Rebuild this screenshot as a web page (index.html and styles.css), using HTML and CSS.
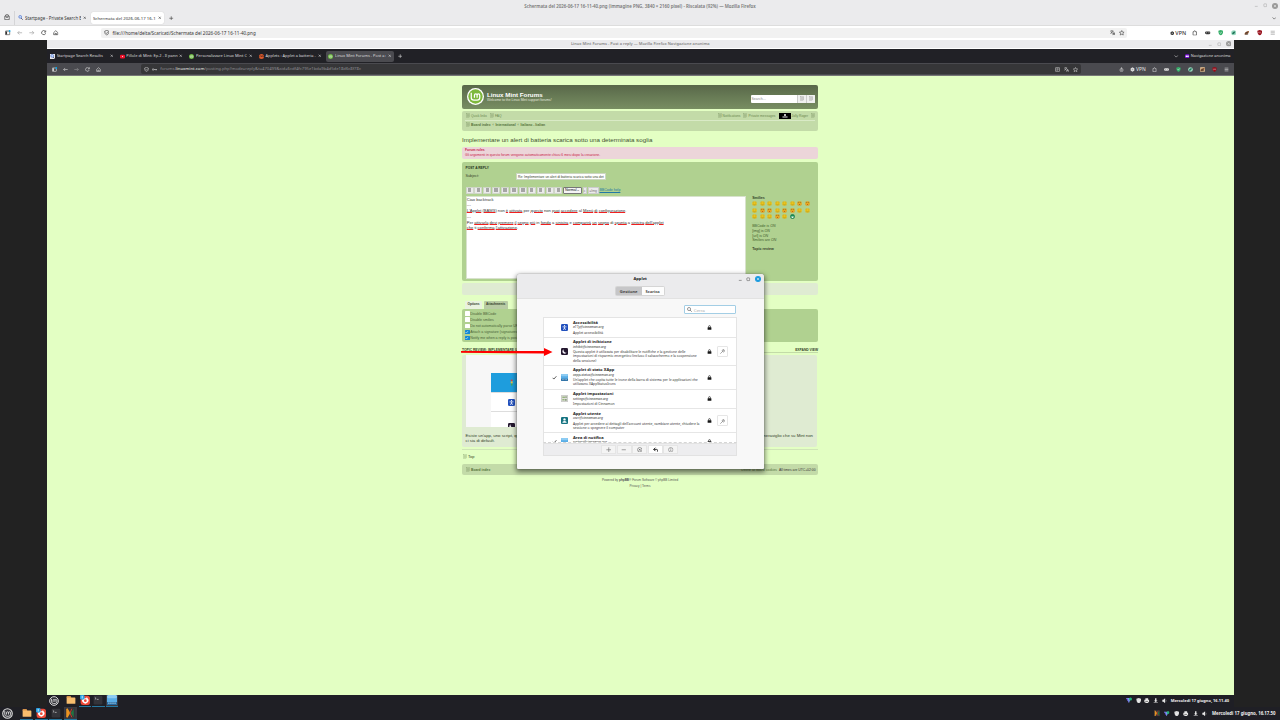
FILE: index.html
```html
<!DOCTYPE html>
<html lang="it">
<head>
<meta charset="utf-8">
<title>Schermata del 2026-06-17 16-11-40.png</title>
<link rel="stylesheet" href="styles.css">
</head>
<body>
<svg class="defs" aria-hidden="true">
  <symbol id="back" viewBox="0 0 16 16"><path d="M15 8H2M7 3L2 8l5 5" fill="none" stroke="currentColor" stroke-width="1.8"/></symbol>
  <symbol id="fwd" viewBox="0 0 16 16"><path d="M1 8h13M9 3l5 5-5 5" fill="none" stroke="currentColor" stroke-width="1.8"/></symbol>
  <symbol id="reload" viewBox="0 0 16 16"><path d="M13.5 9.500A6 6 0 1 1 12.500 4M14 1v5H9" fill="none" stroke="currentColor" stroke-width="2"/></symbol>
  <symbol id="home" viewBox="0 0 16 16"><path d="M2 7.500L8 2l6 5.500V14H2zM6 14v-4h4v4" fill="none" stroke="currentColor" stroke-width="1.800"/></symbol>
  <symbol id="side" viewBox="0 0 16 16"><rect x="1" y="3" width="13" height="11" rx="1.500" fill="none" stroke="currentColor" stroke-width="2"/><path d="M2 4h4v9H2z" fill="currentColor"/><circle cx="14" cy="3" r="3" fill="#00a8f0"/></symbol>
  <symbol id="shield" viewBox="0 0 16 16"><path d="M8 1l6 2.500c0 6-2 9.500-6 11.500C4 13 2 9.500 2 3.500z" fill="none" stroke="currentColor" stroke-width="1.800"/><path d="M5 8l3 2 3-4" fill="none" stroke="currentColor" stroke-width="1.500"/></symbol>
  <symbol id="shieldf" viewBox="0 0 16 16"><path d="M8 0l7 2.500c0 7-2 11-7 13.500C3 13.500 1 9.500 1 2.500z" fill="currentColor"/><path d="M5 7l2.500 3L11 5" fill="none" stroke="#fff" stroke-width="1.500"/></symbol>
  <symbol id="key" viewBox="0 0 16 16"><path d="M6 8h10M13 8v3M1 8a2.500 2.500 0 1 0 5 0 2.500 2.500 0 1 0-5 0" fill="none" stroke="currentColor" stroke-width="1.800"/></symbol>
  <symbol id="x" viewBox="0 0 16 16"><path d="M3 3l10 10M13 3L3 13" stroke="currentColor" stroke-width="2.500"/></symbol>
  <symbol id="plus" viewBox="0 0 16 16"><path d="M8 1v14M1 8h14" stroke="currentColor" stroke-width="2"/></symbol>
  <symbol id="minus" viewBox="0 0 16 16"><path d="M2 8h12" stroke="currentColor" stroke-width="2"/></symbol>
  <symbol id="down" viewBox="0 0 16 16"><path d="M2 5l6 6 6-6" fill="none" stroke="currentColor" stroke-width="2"/></symbol>
  <symbol id="menu" viewBox="0 0 16 16"><path d="M2 3.500h12M2 8h12M2 12.500h12" stroke="currentColor" stroke-width="1.800"/></symbol>
  <symbol id="star" viewBox="0 0 16 16"><path d="M8 1.500l2 4.500 5 .5-3.800 3.300L12.500 15 8 12.300 3.500 15l1.300-5.200L1 6.500 6 6z" fill="none" stroke="currentColor" stroke-width="1.600"/></symbol>
  <symbol id="trans" viewBox="0 0 16 16"><path d="M1 3h9M5.500 1v2M9 3c-1 3-4 6-8 7M3 5c1 2 3 4 5 5M8 15l3.500-8 3.500 8M9 12h5" fill="none" stroke="currentColor" stroke-width="1.700"/></symbol>
  <symbol id="puzzle" viewBox="0 0 16 16"><path d="M3 15V5h3c-1-4 5-4 4 0h3v10z" fill="none" stroke="currentColor" stroke-width="1.800"/></symbol>
  <symbol id="goggles" viewBox="0 0 16 16"><rect y="4" width="16" height="8" rx="4" fill="currentColor"/><circle cx="4.500" cy="8" r="1.800" fill="#aaa"/><circle cx="11.500" cy="8" r="1.800" fill="#aaa"/></symbol>
  <symbol id="vpn" viewBox="0 0 16 16"><path d="M8 1l6 3.500v7L8 15l-6-3.500v-7z" fill="currentColor"/><circle cx="8" cy="8" r="2.500" fill="#aaa"/></symbol>
  <symbol id="leaf" viewBox="0 0 16 16"><circle cx="8" cy="8" r="7.500" fill="#9ad8bf"/><path d="M3 11c1-6 5-7 9-7 0 5-3 8-7 8z" fill="#23795c"/></symbol>
  <symbol id="cat" viewBox="0 0 16 16"><path d="M1 13c1-7 6-9 14-10-1 5-3 9-8 10z" fill="#a5673f"/><path d="M4 9l8-3M3 12h9" stroke="#252525" stroke-width="2"/></symbol>
  <symbol id="ubo" viewBox="0 0 16 16"><path d="M8 0l7 2c0 7-2 11-7 14C3 13 1 9 1 2z" fill="#960c18"/><path d="M4 5v3q2 3 4 0V5M11 5v5" fill="none" stroke="#fff" stroke-width="1"/></symbol>
  <symbol id="reader" viewBox="0 0 16 16"><rect x="2" y="1" width="12" height="14" rx="2" fill="none" stroke="currentColor" stroke-width="1.800"/><path d="M5 5h6M5 8h6M5 11h4" stroke="currentColor" stroke-width="1.500"/></symbol>
  <symbol id="drop" viewBox="0 0 16 16"><path d="M8 2l5 7q0 6-5 6t-5-6zM8 2v6M6 8l2 3 2-3" fill="none" stroke="currentColor" stroke-width="1.800"/></symbol>
  <symbol id="winc" viewBox="0 0 16 16"><circle cx="8" cy="8" r="8" fill="currentColor"/><path d="M5 5l6 6M11 5l-6 6" stroke="#eee" stroke-width="1.600"/></symbol>
  <symbol id="max" viewBox="0 0 16 16"><rect x="3" y="3" width="10" height="10" rx="2" fill="none" stroke="currentColor" stroke-width="2"/></symbol>
  <symbol id="min" viewBox="0 0 16 16"><path d="M3 12h10" stroke="currentColor" stroke-width="2"/></symbol>
  <symbol id="bag" viewBox="0 0 16 16"><path d="M2 6h12v9H2zM3 6l2-4h6l2 4M5 9h6" fill="none" stroke="currentColor" stroke-width="1.800"/></symbol>
  <symbol id="sp" viewBox="0 0 16 16"><circle cx="7" cy="6" r="4.500" fill="#c9defb" stroke="#4467c8" stroke-width="2"/><path d="M10 10l5 5" stroke="#303050" stroke-width="2.500"/></symbol>
  <symbol id="yt" viewBox="0 0 16 16"><rect y="2" width="16" height="12" rx="4" fill="#f0122c"/><path d="M6.500 5.500l4 2.500-4 2.500z" fill="#fff"/></symbol>
  <symbol id="mint" viewBox="0 0 16 16"><circle cx="8" cy="8" r="8" fill="#69b53f"/><path d="M4 4v5q0 3 3 3h3q2.500 0 2.500-3V7q0-1.500-1.500-1.500T9.500 7v2.500M9.500 7q0-1.500-1.500-1.500T6.500 7v2.500" fill="none" stroke="#fff" stroke-width="1.300"/></symbol>
  <symbol id="mintw" viewBox="0 0 16 16"><circle cx="8" cy="8" r="7" fill="#33333a" stroke="#ddd" stroke-width="1.500"/><path d="M4 4.500V9q0 3 3 3h3q2.500 0 2.500-3V7q0-1.500-1.500-1.500T9.500 7v2.500M9.500 7q0-1.500-1.500-1.500T6.500 7v2.500" fill="none" stroke="#ddd" stroke-width="1.300"/></symbol>
  <symbol id="cinn" viewBox="0 0 16 16"><circle cx="8" cy="8" r="8" fill="#dc5a2c"/><path d="M2 9l4-4 3 4 3-4 3 5" fill="none" stroke="#3a1d16" stroke-width="2"/></symbol>
  <symbol id="page" viewBox="0 0 16 16"><rect x="2.500" y="1" width="11" height="14" fill="none" stroke="currentColor" stroke-width="1"/><path d="M5 4h2v3H5zM9 4h2v3H9zM5 9h2v3H5zM9 9h2v3H9z" fill="none" stroke="currentColor" stroke-width=".9"/></symbol>
  <symbol id="lock" viewBox="0 0 16 16"><rect x="2" y="7" width="12" height="8" rx="1" fill="#151515"/><path d="M5 8V5q0-3 3-3t3 3v3" fill="none" stroke="#151515" stroke-width="2"/></symbol>
  <symbol id="wrench" viewBox="0 0 16 16"><path d="M1 15l7-7M8 8a3.800 3.800 0 1 0 2-6 3.800 3.800 0 0 0-2 6M12 3l-1 3" fill="none" stroke="#444" stroke-width="1.500"/></symbol>
  <symbol id="check" viewBox="0 0 16 16"><path d="M2 9l4 4 8-9" fill="none" stroke="currentColor" stroke-width="2.300"/></symbol>
  <symbol id="undo" viewBox="0 0 16 16"><path d="M7 2L2 7l5 5M2 7h9q4 0 3 7" fill="none" stroke="#111" stroke-width="2.500"/></symbol>
  <symbol id="cx" viewBox="0 0 16 16"><circle cx="8" cy="8" r="6.500" fill="none" stroke="#444" stroke-width="1.400"/><path d="M5.500 5.500l5 5M10.500 5.500l-5 5" stroke="#444" stroke-width="1.800"/></symbol>
  <symbol id="info" viewBox="0 0 16 16"><circle cx="8" cy="8" r="6.500" fill="none" stroke="#555" stroke-width="1.300"/><path d="M8 4v2M8 7v5" stroke="#555" stroke-width="1.600"/></symbol>
  <symbol id="glass" viewBox="0 0 16 16"><circle cx="6.500" cy="6.500" r="5" fill="none" stroke="#444" stroke-width="1.700"/><path d="M10 10l5 5" stroke="#444" stroke-width="2"/></symbol>
  <symbol id="acc" viewBox="0 0 16 16"><rect width="16" height="16" rx="3" fill="#2150bd"/><circle cx="8" cy="3.700" r="1.500" fill="#fff"/><path d="M3.500 6.500h9M8 6.500v3.500M8 9l-2.500 4.500M8 9l2.500 4.500" fill="none" stroke="#fff" stroke-width="1.700"/></symbol>
  <symbol id="moon" viewBox="0 0 16 16"><rect width="16" height="16" rx="3" fill="#24182f"/><path d="M6 3a5.300 5.300 0 1 0 7 7.500A6 6 0 0 1 6 3z" fill="#f5f2fa"/></symbol>
  <symbol id="panel" viewBox="0 0 16 16"><rect width="16" height="16" rx="2.500" fill="#5aaee6"/><rect width="16" height="5" rx="2.500" fill="#8dccf3"/><path d="M0 11h16v3.500Q16 16 14 16H2q-2 0-2-1.500z" fill="#256aa0"/><path d="M2 13h12" stroke="#d8effd" stroke-width="1.500" stroke-dasharray="2 1.300"/></symbol>
  <symbol id="sett" viewBox="0 0 16 16"><rect x=".5" y=".5" width="15" height="15" rx="2" fill="#dedfda" stroke="#999"/><path d="M3 5h6M3 11h5" stroke="#6a9a42" stroke-width="2"/><path d="M10 3h3v4h-3zM9 9h4v4H9z" fill="#8c9f80"/></symbol>
  <symbol id="user" viewBox="0 0 16 16"><rect width="16" height="16" rx="2.500" fill="#157381"/><circle cx="8" cy="5.500" r="2.700" fill="#fff"/><path d="M3 13q0-4 5-4t5 4z" fill="#fff"/></symbol>
  <symbol id="folder" viewBox="0 0 16 16"><path d="M1 3q0-1 1-1h5l1.500 2H14q1 0 1 1v8q0 1-1 1H2q-1 0-1-1z" fill="#f7bd6d"/><path d="M1 3q0-1 1-1h5l1.500 2H1z" fill="#dc9345"/></symbol>
  <symbol id="ff" viewBox="0 0 16 16"><rect x="1" y="1" width="15" height="15" rx="4" fill="#ee4938"/><path d="M5 5a5 5 0 1 0 7 0l-1-2-1 2H8z" fill="#fff"/><circle cx="8.500" cy="9" r="2.200" fill="#ee4938"/><circle cx="3.500" cy="3.500" r="4" fill="#2aa0e2"/><path d="M3.500 1.500v4" stroke="#fff" stroke-width="1.200"/></symbol>
  <symbol id="term" viewBox="0 0 16 16"><rect x="1" y="1" width="14" height="14" rx="2" fill="#34343a"/><path d="M3 4l2 1.500L3 7M6 7h3" fill="none" stroke="#ddd"/></symbol>
  <symbol id="xk" viewBox="0 0 16 16"><rect width="16" height="16" fill="#35333a"/><path d="M2 1l5 7-5 7z" fill="#ed9622"/><path d="M14 1L9 8l5 7z" fill="#237342"/><path d="M3 1l4 7-4 7" fill="none" stroke="#ed9622" stroke-width="2.500"/><path d="M11 1L8 8l3 7" fill="none" stroke="#d83b25" stroke-width="1.500"/></symbol>
  <symbol id="vtri" viewBox="0 0 16 16"><path d="M0 2h13L8 15z" fill="#77a5ea"/><path d="M0 2l5 2 3 11z" fill="#7148d6"/><circle cx="12" cy="4.500" r="4" fill="#23b67b"/></symbol>
  <symbol id="print" viewBox="0 0 16 16"><path d="M4 1h8v4H4zM1 5h14v7H1zM4 10h8v5H4z" fill="#e6e6e6"/><path d="M4 10h8" stroke="#222" stroke-width="1.500"/></symbol>
  <symbol id="dl" viewBox="0 0 16 16"><path d="M6 1h4v6h3l-5 5-5-5h3zM2 13h12v2H2z" fill="#e6e6e6"/></symbol>
  <symbol id="vol" viewBox="0 0 16 16"><path d="M1 5h3l5-4v14l-5-4H1z" fill="#e6e6e6"/><path d="M11 5q2 3 0 6" fill="none" stroke="#aaa" stroke-width="1.500"/></symbol>
  <symbol id="mask" viewBox="0 0 16 16"><rect y="1" width="16" height="14" rx="5" fill="#7a10d8"/><path d="M2 6q3-2 6 0 3-2 6 0 0 5-3 5-2 0-3-2-1 2-3 2-3 0-3-5z" fill="#fff"/></symbol>
  <symbol id="smile" viewBox="0 0 16 16"><circle cx="8" cy="8" r="7.500" fill="#f6cf20" stroke="#b69a30" stroke-width=".8"/><path d="M5.500 5v2.500M10.500 5v2.500" stroke="#5c4614" stroke-width="1.500"/><path d="M4 10.500q4 3 8 0" fill="none" stroke="#6c5214" stroke-width="1.200"/></symbol>
  <symbol id="smile2" viewBox="0 0 16 16"><circle cx="8" cy="8" r="7.500" fill="#f5b422" stroke="#b08030" stroke-width=".8"/><path d="M4 5.500h3M9 5.500h3" stroke="#463518" stroke-width="2"/><path d="M5 10q3 5 6 0z" fill="#a03018"/></symbol>
  <symbol id="green" viewBox="0 0 16 16"><circle cx="8" cy="8" r="7" fill="#168e55" stroke="#145c39"/><path d="M4 8h8q-1 5-4 5t-4-5" fill="#fff"/></symbol>
</svg>

<header class="titlebar outer-title"><span>Schermata del 2026-06-17 16-11-40.png (immagine PNG, 3840 × 2160 pixel) - Riscalata (92%) — Mozilla Firefox</span>
  <div class="wincontrols"><svg class="i4"><use href="#min"/></svg><svg class="i4"><use href="#max"/></svg><svg class="i6"><use href="#winc"/></svg></div>
</header>
<div class="outer-tabs">
  <div class="recent"><svg class="i6"><use href="#bag"/></svg></div>
  <div class="otab"><svg class="i5"><use href="#sp"/></svg><span>Startpage - Private Search E</span><svg class="i3"><use href="#x"/></svg></div>
  <div class="otab on"><span>Schermata del 2026-06-17 16-1</span><svg class="i3"><use href="#x"/></svg></div>
  <svg class="i4 addtab"><use href="#plus"/></svg>
  <svg class="i4 alltabs"><use href="#down"/></svg>
</div>
<nav class="bar outer-bar">
  <div class="navicons"><svg><use href="#side"/></svg><svg class="dim"><use href="#back"/></svg><svg class="dim"><use href="#fwd"/></svg><svg><use href="#reload"/></svg><svg><use href="#home"/></svg></div>
  <div class="url"><svg><use href="#shield"/></svg><span class="addr">file:///home/delta/Scaricati/Schermata del 2026-06-17 16-11-40.png</span><div class="urlend"><svg><use href="#trans"/></svg><svg><use href="#star"/></svg></div></div>
  <div class="ext"><div class="vpn"><svg><use href="#vpn"/></svg>VPN</div><svg><use href="#puzzle"/></svg><svg><use href="#goggles"/></svg><svg class="grn"><use href="#shieldf"/></svg><svg><use href="#leaf"/></svg><svg><use href="#cat"/></svg><svg><use href="#ubo"/></svg><svg class="dim"><use href="#menu"/></svg></div>
</nav>

<main class="shot">
  <div class="titlebar inner-title"><span>Linux Mint Forums - Post a reply — Mozilla Firefox Navigazione anonima</span>
    <div class="wincontrols"><svg class="i4"><use href="#min"/></svg><svg class="i4"><use href="#max"/></svg><svg class="i6"><use href="#winc"/></svg></div>
  </div>
  <div class="inner-tabs">
    <div class="itab"><svg class="i5 wbg"><use href="#sp"/></svg><span>Startpage Search Results</span><svg class="i3"><use href="#x"/></svg></div>
    <div class="itab"><svg class="i5"><use href="#yt"/></svg><span>Pillole di Mint: Ep.2 - Il pann</span><svg class="i3"><use href="#x"/></svg></div>
    <div class="itab"><svg class="i5"><use href="#mint"/></svg><span>Personalizzare Linux Mint C</span><svg class="i3"><use href="#x"/></svg></div>
    <div class="itab"><svg class="i5"><use href="#cinn"/></svg><span>Applets : Applet a batteria -</span><svg class="i3"><use href="#x"/></svg></div>
    <div class="itab on"><svg class="i5"><use href="#mint"/></svg><span>Linux Mint Forums - Post a r</span><svg class="i3"><use href="#x"/></svg></div>
    <svg class="i4 addtab"><use href="#plus"/></svg>
    <div class="private"><svg class="i4"><use href="#down"/></svg><svg class="i4"><use href="#mask"/></svg><span>Navigazione anonima</span></div>
  </div>
  <nav class="bar inner-bar">
    <div class="navicons"><svg><use href="#side"/></svg><svg><use href="#back"/></svg><svg class="dim"><use href="#fwd"/></svg><svg><use href="#reload"/></svg><svg><use href="#home"/></svg></div>
    <div class="url"><svg><use href="#shield"/></svg><svg class="key"><use href="#key"/></svg><span class="addr">forums.<b>linuxmint.com</b>/posting.php?mode=reply&amp;t=470499&amp;sid=6cdf4fc795e1bda9b4d5de18d6c8f78c</span><div class="urlend"><svg><use href="#reader"/></svg><svg><use href="#trans"/></svg><svg><use href="#star"/></svg></div></div>
    <div class="ext"><svg><use href="#drop"/></svg><div class="vpn"><svg><use href="#vpn"/></svg>VPN</div><svg><use href="#puzzle"/></svg><svg><use href="#goggles"/></svg><svg class="grn"><use href="#shieldf"/></svg><svg><use href="#leaf"/></svg><svg class="tan"><use href="#cat"/></svg><svg><use href="#ubo"/></svg><svg><use href="#menu"/></svg></div>
  </nav>

  <div class="page">
    <div class="forum">
      <div class="fhead"><svg class="logo" viewBox="0 0 32 32"><circle cx="16" cy="16" r="16" fill="#fff"/><circle cx="16" cy="16" r="13.500" fill="#7eb83c"/><path d="M8 9v9q0 5 5 5h6q5 0 5-5v-4q0-3-2.500-3T19 14v4.500M19 14q0-3-2.500-3T14 14v4.500" fill="none" stroke="#fff" stroke-width="2.300"/></svg>
        <div class="brand"><h1>Linux Mint Forums</h1><p>Welcome to the Linux Mint support forums!</p></div>
        <div class="search"><span>Search…</span><i><svg><use href="#page"/></svg></i><i><svg><use href="#page"/></svg></i></div>
      </div>
      <div class="fnav">
        <div class="frow"><svg class="pg"><use href="#page"/></svg><span>Quick links</span><svg class="pg"><use href="#page"/></svg><span>FAQ</span><div class="right"><svg class="pg"><use href="#page"/></svg><span>Notifications</span><svg class="pg"><use href="#page"/></svg><span class="pm">Private messages</span><svg class="avatar" viewBox="0 0 24 12"><rect width="24" height="12"/><circle cx="12" cy="4" r="2" fill="#fff"/><path d="M7 9l10-2M7 7l10 2" stroke="#fff"/></svg><span>Jolly Roger</span><svg class="pg last"><use href="#page"/></svg></div></div>
        <div class="frow crumbs"><svg class="pg"><use href="#page"/></svg><b>Board index &nbsp;‹&nbsp; International &nbsp;‹&nbsp; Italiano - Italian</b></div>
      </div>
      <h2>Implementare un alert di batteria scarica sotto una determinata soglia</h2>
      <div class="rules"><b>Forum rules</b><span>Gli argomenti in questo forum vengono automaticamente chiusi 6 mesi dopo la creazione.</span></div>
      <div class="post">
        <h3>POST A REPLY</h3>
        <div class="subject"><label>Subject:</label><div class="field">Re: Implementare un alert di batteria scarica sotto una det</div></div>
        <div class="tools"><i></i><i></i><i></i><i></i><i></i><i></i><i></i><i></i><i></i><i></i><i></i><div class="sel">Normal <svg><use href="#down"/></svg></div><em class="c">c</em><em class="img">=Img</em><a>BBCode help</a></div>
        <div class="compose">
          <div class="area"><p>Ciao backtrack</p><p>---</p><p><u>L'Applet</u> (<u>BAMS</u>) non <u>è</u> <u>attivata</u> per <u>questo</u> non <u>puoi</u> <u>accedere</u> al <u>Menù</u> <u>di</u> <u>configurazione</u>.</p><p>---</p><p>Per <u>attivarla</u> <u>devi</u> <u>premere</u> <u>il</u> <u>segno</u> <u>più</u> in <u>fondo</u> a <u>sinistra</u> e <u>comparirà</u> <u>un</u> <u>segno</u> di <u>spunta</u> a <u>sinistra</u> <u>dell'applet</u></p><p><u>che</u> ti <u>conferma</u> <u>l'attivazione</u>.</p></div>
          <aside><b>Smilies</b>
            <div class="smiles"><svg><use href="#smile"/></svg><svg><use href="#smile"/></svg><svg><use href="#smile"/></svg><svg><use href="#smile"/></svg><svg><use href="#smile"/></svg><svg><use href="#smile"/></svg><svg><use href="#smile2"/></svg><svg><use href="#smile2"/></svg><svg><use href="#smile"/></svg><svg><use href="#smile2"/></svg><svg><use href="#smile2"/></svg><svg><use href="#smile"/></svg><svg><use href="#smile2"/></svg><svg><use href="#smile2"/></svg><svg><use href="#smile"/></svg><svg><use href="#smile"/></svg><svg><use href="#smile"/></svg><svg><use href="#smile"/></svg><svg><use href="#smile"/></svg><svg><use href="#smile2"/></svg><svg><use href="#smile"/></svg><svg><use href="#green"/></svg></div>
            <p>BBCode is <em>ON</em></p><p>[img] is <em>ON</em></p><p>[url] is <em>ON</em></p><p>Smilies are <em>ON</em></p><b class="review">Topic review</b></aside>
        </div>
      </div>
      <div class="submit"></div>
      <div class="opttabs"><b>Options</b><b class="off">Attachments</b></div>
      <div class="options"><label><i></i>Disable BBCode</label><label><i></i>Disable smilies</label><label><i></i>Do not automatically parse URLs</label><label><i class="ck"><svg><use href="#check"/></svg></i>Attach a signature (signatures can be altered)</label><label><i class="ck"><svg><use href="#check"/></svg></i>Notify me when a reply is posted</label></div>
      <div class="tr-head"><b>TOPIC REVIEW: IMPLEMENTARE UN</b><b class="ev">EXPAND VIEW</b></div>
      <div class="tr-box">
        <div class="attach"><div class="sheet"><div class="blue"><svg viewBox="0 0 10 20"><path d="M4 1h3l1 4H3z" fill="#e64437"/><path d="M3 6h5v5H3z" fill="#f0bd39"/><path d="M3 12h5l-2 7z" fill="#4cab48"/></svg></div><div><svg><use href="#acc"/></svg></div><div class="cut"><svg><use href="#moon"/></svg></div></div></div>
        <p class="lastline"><span>Esiste un'app, uno script, qualcosa</span><span>meraviglio che su Mint non</span></p><p>ci sia di default.</p>
      </div>
      <div class="rule"></div>
      <div class="top"><svg class="pg"><use href="#page"/></svg>Top</div>
      <div class="fbar"><svg class="pg"><use href="#page"/></svg><b>Board index</b><span>Delete all board cookies</span><em>All times are UTC+02:00</em></div>
      <footer><p>Powered by <b>phpBB</b>® Forum Software © phpBB Limited</p><p>Privacy | Terms</p></footer>
    </div>
  </div>

  <div class="taskbar inner-task"><svg class="mi"><use href="#mintw"/></svg><div class="apps"><span><svg><use href="#folder"/></svg></span><span class="run"><svg><use href="#ff"/></svg></span><span class="run"><svg><use href="#term"/></svg></span><span class="run act"><svg><use href="#panel"/></svg></span></div>
    <div class="tray"><svg><use href="#vtri"/></svg><svg class="lt"><use href="#shieldf"/></svg><svg><use href="#print"/></svg><svg><use href="#dl"/></svg><svg><use href="#vol"/></svg><b>Mercoledì 17 giugno, 16.11.40</b></div></div>

  <section class="dialog">
    <div class="dhead"><div class="dtitle"><b>Applet</b><div class="wincontrols"><svg class="i4"><use href="#min"/></svg><svg class="i4"><use href="#max"/></svg><svg class="i6 blu"><use href="#winc"/></svg></div></div>
      <div class="switch"><b>Gestione</b><b class="wh">Scarica</b></div></div>
    <div class="find"><svg><use href="#glass"/></svg>Cerca</div>
    <div class="list">
      <div class="item r1"><i></i><svg class="ic"><use href="#acc"/></svg><div class="txt"><b>Accessibilità</b><em>a11y@cinnamon.org</em><p>Applet accessibilità</p></div><svg class="lk"><use href="#lock"/></svg></div>
      <div class="item r2"><i></i><svg class="ic"><use href="#moon"/></svg><div class="txt"><b>Applet di inibizione</b><em>inhibit@cinnamon.org</em><p>Questa applet è utilizzata per disabilitare le notifiche e la gestione delle<br>impostazioni di risparmio energetico (incluso il salvaschermo e la sospensione<br>della sessione)</p></div><svg class="lk"><use href="#lock"/></svg><div class="cfg"><svg><use href="#wrench"/></svg></div></div>
      <div class="item r3"><i><svg><use href="#check"/></svg></i><svg class="ic"><use href="#panel"/></svg><div class="txt"><b>Applet di stato XApp</b><em>xapp-status@cinnamon.org</em><p>Un'applet che ospita tutte le icone della barra di sistema per le applicazioni che<br>utilizzano XAppStatusIcons</p></div><svg class="lk"><use href="#lock"/></svg></div>
      <div class="item r4"><i></i><svg class="ic"><use href="#sett"/></svg><div class="txt"><b>Applet impostazioni</b><em>settings@cinnamon.org</em><p>Impostazioni di Cinnamon</p></div><svg class="lk"><use href="#lock"/></svg></div>
      <div class="item r5"><i></i><svg class="ic"><use href="#user"/></svg><div class="txt"><b>Applet utente</b><em>user@cinnamon.org</em><p>Applet per accedere ai dettagli dell'account utente, cambiare utente, chiudere la<br>sessione o spegnere il computer</p></div><svg class="lk"><use href="#lock"/></svg><div class="cfg"><svg><use href="#wrench"/></svg></div></div>
      <div class="item r6"><i><svg><use href="#check"/></svg></i><svg class="ic"><use href="#panel"/></svg><div class="txt"><b>Area di notifica</b><em>systray@cinnamon.org</em></div><svg class="lk"><use href="#lock"/></svg></div>
    </div>
    <div class="dtools"><i><svg><use href="#plus"/></svg></i><i><svg><use href="#minus"/></svg></i><i><svg><use href="#cx"/></svg></i><i class="w"><svg><use href="#undo"/></svg></i><i><svg><use href="#info"/></svg></i></div>
  </section>
  <svg class="arrow" viewBox="0 0 92 10"><path d="M0 3.900l83 .1V.9L91.500 5.100l-8.500 4V6.500L0 5.800z" fill="#f00"/></svg>
</main>
<div class="taskbar outer-task"><svg class="mi"><use href="#mintw"/></svg><div class="apps"><span class="run"><svg><use href="#folder"/></svg></span><span class="run"><svg><use href="#ff"/></svg></span><span class="run"><svg><use href="#term"/></svg></span><span class="run act"><svg><use href="#xk"/></svg></span></div>
  <div class="tray"><svg><use href="#xk"/></svg><svg><use href="#vtri"/></svg><svg class="lt"><use href="#shieldf"/></svg><svg><use href="#print"/></svg><svg><use href="#dl"/></svg><svg><use href="#vol"/></svg><b>Mercoledì 17 giugno, 16.17.50</b></div></div>
</body>
</html>
```
FILE: styles.css
```css
* { box-sizing: border-box; }
body { margin: 0; width: 1280px; height: 720px; overflow: hidden; background: #222; color: #333; font: 4px/6px "Noto Sans", "Open Sans", sans-serif; display: flex; flex-direction: column; }
h1, h2, h3, p { margin: 0; font: inherit; }
i, em { font-style: normal; }
svg { display: block; flex: none; }
.defs { position: absolute; width: 0; height: 0; }
span, b, em, p { white-space: nowrap; }
.i3 { width: 3.5px; height: 3.5px; }
.i4 { width: 4.5px; height: 4.5px; }
.i5 { width: 5px; height: 5px; }
.i6 { width: 6px; height: 6px; }

/* window chrome */
.titlebar { background: #ebebed; display: flex; justify-content: center; align-items: center; color: #777; font-weight: 600; font-size: 4.4px; }
.wincontrols { position: absolute; right: 2.5px; display: flex; align-items: center; gap: 4.3px; color: #aaa; }
.wincontrols .i6 { color: #999; }
.outer-title { height: 11px; position: relative; }
.outer-tabs { height: 15px; background: #ebebed; display: flex; align-items: center; border-bottom: .5px solid #ddd; padding-bottom: .5px; }
.recent { width: 14.500px; height: 15px; padding: 4px 0 0 4px; border-right: 1px solid #d5d5d7; color: #444; margin-right: 3.500px; }
.otab { height: 12px; width: 70px; display: flex; align-items: center; gap: 2px; padding: 0 2px 0 0; margin-right: 3px; font-size: 4.380px; color: #333; }
.otab span { width: 57px; overflow: hidden; }
.otab.on { background: #fff; border-radius: 2px; width: 73px; padding: 0 2px; box-shadow: 0 0 1px #bbb; font-size: 4.320px; }
.otab.on span { width: 63px; }
.addtab { margin-left: 2px; }
.alltabs { margin-left: auto; margin-right: 4px; }
.bar { display: flex; align-items: center; }
.bar svg { width: 5.500px; height: 5.500px; }
.navicons { display: flex; flex: none; }
.url { flex: none; display: flex; align-items: center; border-radius: 2px; }
.urlend { margin-left: auto; display: flex; gap: 4px; }
.dim { opacity: .5; }
.grn { color: #35ad68; }
.ext { display: flex; margin-left: auto; align-items: center; }
.vpn { display: flex; align-items: center; font-weight: 500; }
.vpn svg { width: 4.500px; height: 4.500px; }
.outer-bar { height: 13.500px; background: #fff; color: #333; }
.outer-bar .navicons { gap: 6.500px; padding-left: 5px; width: 101px; }
.outer-bar .url { width: 1026px; height: 10.500px; background: #f1f1f1; padding: 0 2.500px; }
.outer-bar .addr { margin-left: 3.500px; font-size: 4.540px; }
.outer-bar .ext { gap: 7.400px; padding-right: 5px; }
.outer-bar .vpn { gap: 1px; font-size: 5.400px; margin-right: -1.400px; }

.shot { position: relative; margin-left: 47px; width: 1186.500px; height: 667px; display: flex; flex-direction: column; }
.inner-title { height: 9.500px; font-size: 3.960px; position: relative; color: #858585; border-bottom: .5px solid #fff; }
.inner-title .i6 { width: 5.500px; height: 5.500px; }
.inner-tabs { height: 14px; background: #212126; color: #ddd; display: flex; align-items: center; padding-left: 1px; font-size: 3.960px; }
.itab { width: 68px; height: 11px; margin-right: 1.600px; display: flex; align-items: center; padding: 0 3px 0 2px; border-radius: 2px; }
.itab span { width: 52px; overflow: hidden; margin: 0 1.500px 0 1.700px; }
.itab.on { background: #4b4b50; }
.wbg { background: #e8e8e8; }
.private { margin-left: auto; display: flex; align-items: center; padding-right: 3px; gap: 1.200px; font-size: 3.900px; }
.private .i4:first-child { margin-right: 5px; }
.inner-bar { height: 13px; background: #4a4a4f; color: #ddd; border-bottom: .5px solid #777; }
.inner-bar svg { width: 5px; height: 5px; }
.inner-bar .navicons { gap: 6px; padding-left: 5px; width: 94px; }
.inner-bar .url { width: 939.500px; height: 10px; background: #363638; padding: 0 2.500px; }
.inner-bar .key { margin-left: 3.700px; }
.inner-bar .addr { margin-left: 3px; font-size: 4.190px; color: #8f8f93; }
.inner-bar .addr b { color: #ddd; font-weight: 500; }
.inner-bar .ext { gap: 6.900px; padding-right: 5px; }
.inner-bar .vpn { gap: .5px; font-size: 4.900px; margin: 0 -.5px; }
.tan { background: #c7a984; border-radius: 1px; }

/* forum page */
.page { height: 618.500px; background: #e3ffc3; padding: 8.500px 0 0 415px; color: #333f29; font-family: "Liberation Sans", Arial, sans-serif; }
.forum { width: 356px; }
.pg { width: 4px; height: 5px; color: #6f8858; margin-top: -1px; }
.fhead { height: 24.500px; border-radius: 2px; background: linear-gradient(#586849, #788e62); display: flex; align-items: center; padding: 0 3px 0 4.500px; color: #fff; }
.logo { width: 17px; height: 17px; }
.brand { margin-left: 3.500px; }
.brand h1 { font-size: 6.220px; line-height: 7px; font-weight: bold; margin-top: -1px; }
.brand p { font-size: 3.410px; line-height: 4px; color: #e5eadd; margin-top: .3px; }
.search { margin-left: auto; margin-top: 4px; width: 64.500px; height: 8px; background: #fff; border-radius: 1px; display: flex; font-size: 3.500px; line-height: 8px; color: #888; overflow: hidden; }
.search span { flex: 1; padding-left: 1px; }
.search i { width: 9px; border-left: .5px solid #ccc; background: #f0f0f0; padding: 1.500px 2px; }
.search svg { width: 4.500px; height: 5px; color: #888; }
.fnav { margin-top: 1.500px; height: 20px; background: #c3dba8; border-radius: 2px; padding: .5px 3px; }
.frow { display: flex; align-items: center; height: 9px; gap: 1px; font-size: 3.300px; color: #6a874d; padding-left: 1px; }
.frow span { margin-right: 2px; padding-top: .5px; }
.right { margin-left: auto; display: flex; gap: 1px; align-items: center; }
.pm { letter-spacing: .05px; }
.avatar { width: 12px; height: 6px; }
.crumbs { border-top: .5px solid #d9eac6; height: 9.500px; font-size: 3.380px; color: #55713a; }
.forum h2 { font-size: 6.210px; line-height: 8px; margin-top: 5px; height: 11px; color: #3f5230; }
.rules { height: 12.700px; border-radius: 2px; background: #ecd5d9; color: #c8264a; padding: 1.800px 3px; font-size: 3.420px; line-height: 4.800px; display: flex; flex-direction: column; }
.post { margin-top: 3px; height: 118.500px; background: #b0d190; border-radius: 2px; padding: 2.500px 3.500px; }
.post h3 { font-size: 3.250px; line-height: 6px; font-weight: bold; color: #26331c; }
.subject { display: flex; margin-top: 2.500px; height: 7px; font-size: 3.750px; font-weight: 500; }
.subject label { width: 50.500px; }
.field { width: 90px; height: 7px; background: #fff; border: .5px solid #ccd6c2; font-size: 3.340px; line-height: 6px; padding-left: 1px; white-space: nowrap; }
.tools { display: flex; gap: .9px; margin-top: 6.500px; height: 8px; font-size: 3.500px; line-height: 7px; }
.tools > i { width: 8px; height: 7.500px; border-radius: .7px; background: #ebebeb; display: flex; align-items: center; justify-content: center; border: .5px solid #d0d6ca; }
.tools > i::before { content: ""; width: 3.500px; height: 4px; background: #a5a5a5; }
.sel { width: 18.500px; height: 7px; background: #f5f5f5; border: .6px solid #777; border-radius: 1px; padding-left: .6px; color: #111; display: flex; line-height: 6px; gap: .7px; align-items: center; font-size: 3.650px; }
.sel svg { width: 2.500px; height: 3px; }
.tools em { background: #ebebeb; border: .5px solid #ccc; text-align: center; width: 4px; height: 7.500px; color: #777; line-height: 6px; }
.tools .img { width: 11px; }
.tools a { color: #2378a5; text-decoration: underline; font-size: 3.550px; white-space: nowrap; }
.compose { display: flex; margin-top: 1px; }
.area { width: 280px; height: 83px; background: #fff; border: .5px solid #d8e2cd; padding: 0 .2px; font-size: 4.085px; line-height: 5.750px; color: #333; }
.area u { text-decoration: underline solid #f02020 .8px; text-underline-offset: .3px; }
aside { padding-left: 6.700px; font-size: 3.600px; }
aside b { display: block; line-height: 5px; }
.smiles { display: grid; grid-template-columns: repeat(8, 5px); gap: 1.500px 2.500px; margin: .5px 0 4.500px; }
.smiles svg { width: 5px; height: 5px; }
aside p { line-height: 4.900px; color: #435c2e; }
aside em { font-style: italic; }
aside .review { margin-top: 3.700px; }
.submit { margin-top: 2px; height: 12.500px; border-radius: 2px; background: #dfebd2; }
.opttabs { height: 7.500px; margin: 6px 0 0 3px; display: flex; gap: 1.500px; font-size: 3.200px; line-height: 7.500px; }
.opttabs b { padding: 0 2.500px; background: #e9f2df; border-radius: 1px 1px 0 0; }
.opttabs .off { background: #b8cba4; }
.options { margin-top: .8px; height: 32.500px; border-radius: 2px; background: #b0d190; padding: 1.200px 3px; font-size: 3.550px; }
.options label { display: flex; align-items: center; height: 6.050px; gap: .7px; color: #4a6238; white-space: nowrap; }
.options i { width: 4.500px; height: 4.500px; background: #fff; border-radius: .6px; flex: none; }
.options .ck { background: #1187d4; color: #fff; padding: .4px; }
.ck svg { width: 3.700px; height: 3.700px; }
.tr-head { margin-top: 5.500px; height: 6px; display: flex; justify-content: space-between; font-size: 3.300px; border-bottom: .5px solid #c3dba8; }
.tr-box { margin-top: 1.500px; height: 92px; border-radius: 2px; background: #dfebd2; margin-right: 1.500px; padding: .5px 3.500px; font-size: 4.270px; line-height: 5.500px; }
.attach { width: 100px; height: 71.500px; background: #f7f7f7; padding: 18px 0 0 25px; overflow: hidden; margin-bottom: 6px; }
.sheet { background: #fff; }
.sheet > div { height: 19.500px; border-bottom: .5px solid #ddd; padding: 6px 0 0 17.500px; }
.sheet svg { width: 7px; height: 7px; }
.sheet .blue { background: #1e9ddd; }
.sheet .blue svg { width: 7px; height: 8px; }
.sheet .cut { padding-top: 11px; }
.lastline { display: flex; justify-content: space-between; }
.rule { margin-top: 2px; height: 1px; background: #cfe5b7; }
.top { height: 14px; display: flex; align-items: center; gap: 1px; padding-left: 1px; font-size: 4px; }
.fbar { height: 11px; border-radius: 2px; background: #c3dba8; display: flex; align-items: center; padding: 1px 2.500px 0 4px; gap: 1px; font-size: 3.350px; color: #55713a; }
.fbar span { margin-left: auto; }
.fbar em { color: #333; margin-left: 1px; }
footer { text-align: center; margin-top: 3.500px; font-size: 3.080px; line-height: 5.500px; color: #555; }

/* applet settings window */
.dialog { position: absolute; left: 469.700px; top: 234.500px; width: 247px; height: 195px; background: #f8f8f8; border-radius: 3px 3px 1px 1px; box-shadow: 0 2px 5px 1px rgba(0,0,0,.5), 0 0 1px #777; color: #333; }
.dhead { height: 24.500px; background: #ebebed; border-bottom: .5px solid #e2e2e2; border-radius: 3px 3px 0 0; }
.dtitle { position: relative; height: 10.500px; display: flex; align-items: center; justify-content: center; font-size: 4.100px; color: #222; }
.dtitle .wincontrols { color: #555; }
.dtitle .wincontrols .blu { color: #1799df; }
.switch { display: flex; width: 50px; height: 10.500px; margin: 1px 0 0 98px; border: .5px solid #d5d5d5; border-radius: 1.500px; font-size: 4.100px; line-height: 10px; text-align: center; overflow: hidden; }
.switch b { width: 27px; background: #c6c6c8; font-weight: 600; }
.switch .wh { background: #fdfdfd; width: 23px; }
.find { width: 52px; height: 9px; margin: 6.500px 0 0 167px; border: .8px solid #a3cee5; background: #fff; border-radius: 1px; display: flex; align-items: center; gap: 2px; padding-left: 2px; font-size: 4.300px; color: #aaa; }
.find svg { width: 5px; height: 5px; }
.list { margin: 3px 0 0 26px; width: 194px; height: 125.500px; overflow: hidden; background: #fff; border: .5px solid #e4e4e4; border-bottom: .5px dashed #d5d5d5; }
.item { display: flex; align-items: center; border-bottom: .5px solid #e6e6e6; }
.item > i { width: 17.500px; padding-left: 8px; color: #222; }
.item > i svg { width: 5px; height: 5px; }
.ic { width: 7px; height: 7px; }
.txt { margin-left: 4.800px; width: 134px; align-self: flex-start; padding-top: 1.800px; }
.txt b { display: block; font-size: 4.060px; line-height: 5.500px; color: #222; }
.txt em { display: block; font-style: italic; font-size: 3.330px; line-height: 4.500px; }
.txt p { font-size: 3.380px; line-height: 4.300px; margin-top: .8px; }
.lk { width: 5px; height: 5px; }
.cfg { width: 11px; height: 11px; border: .5px solid #e6e6e6; border-radius: 1px; margin-left: 5px; padding: 2.500px; }
.cfg svg { width: 5px; height: 5px; }
.r1 { height: 19.500px; } .r2 { height: 28px; } .r3 { height: 24px; } .r4 { height: 19.500px; } .r5 { height: 24px; } .r6 { height: 18px; }
.dtools { margin-left: 26px; width: 194px; height: 13px; background: #ededef; border: .5px solid #e2e2e2; display: flex; justify-content: center; align-items: center; gap: .4px; padding-top: .8px; }
.dtools i { width: 15.200px; height: 9.500px; border: .4px solid #e5e5e5; background: #f4f4f4; display: flex; align-items: center; justify-content: center; color: #777; }
.dtools .w { background: #fff; }
.dtools svg { width: 5.500px; height: 5.500px; }
.arrow { position: absolute; left: 414px; top: 307.500px; width: 92px; height: 10px; }

/* taskbars */
.taskbar { background: #1f1f25; color: #f0f0f0; display: flex; align-items: center; }
.apps { display: flex; height: 100%; }
.apps span { display: flex; justify-content: center; align-items: center; border-bottom: .6px solid transparent; }
.apps .run { border-color: #26779f; }
.apps .act { background: #393940; }
.tray { margin-left: auto; display: flex; align-items: center; }
.inner-task { height: 12px; padding-left: 1.500px; }
.inner-task .mi { width: 10px; height: 10px; margin-right: 6.500px; }
.inner-task .apps span { width: 12.500px; margin-right: 1.100px; }
.apps svg { width: 10px; height: 10px; }
.tray svg { width: 5.500px; height: 5.500px; }
.tray svg:not(.lt):first-child { width: 6px; height: 6.500px; }
.lt { color: #ddd; }
.inner-task .tray { gap: 3.200px; padding-right: 4.500px; }
.inner-task .tray b { margin-left: .3px; font-size: 3.990px; }
.outer-task { height: 13.500px; padding-left: 2px; }
.outer-task .mi { width: 11px; height: 11px; margin-right: 7px; }
.outer-task .apps span { width: 13px; margin-right: 1.600px; }
.outer-task .tray { gap: 4px; padding-right: 4.500px; }
.outer-task .tray b { font-size: 4.350px; }
```
